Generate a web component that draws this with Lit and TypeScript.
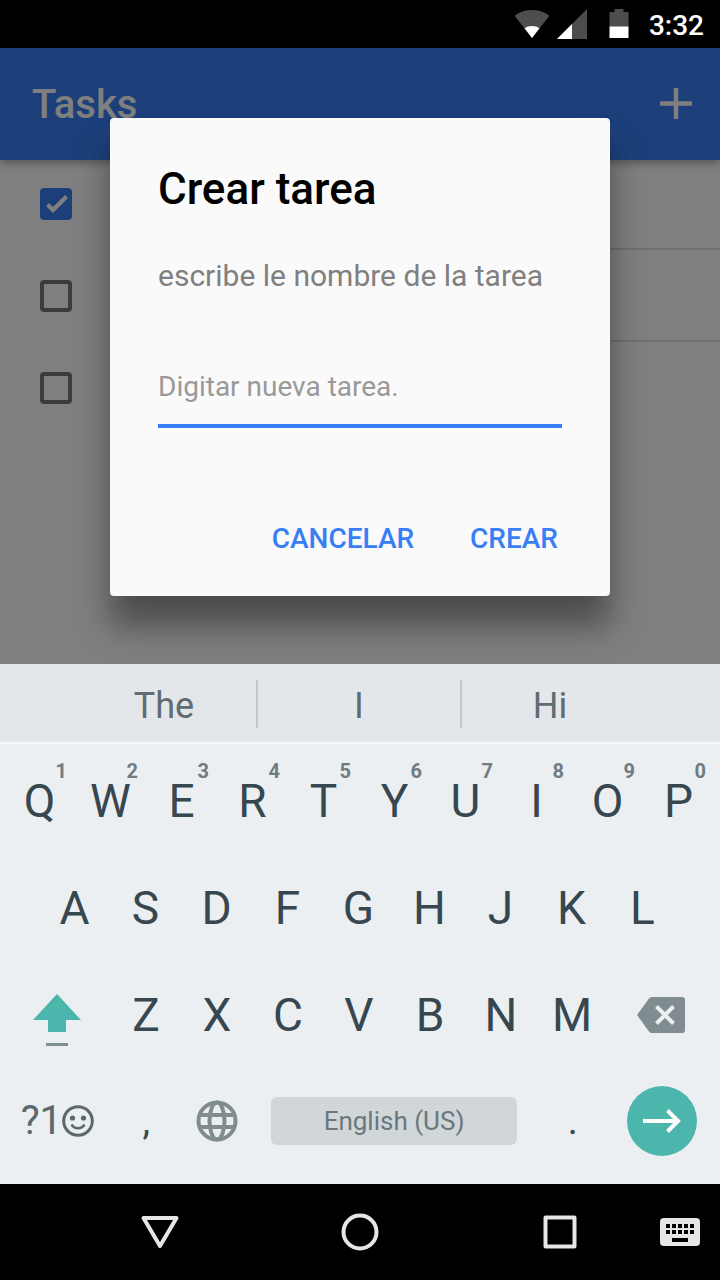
import { LitElement, html, css, svg } from "lit";
import { customElement, state } from "lit/decorators.js";

@customElement("status-bar")
class StatusBar extends LitElement {
  static styles = css`
    :host {
      display: flex;
      align-items: center;
      justify-content: flex-end;
      height: 48px;
      padding-right: 16px;
      background: #000;
      color: #fff;
    }
    .wifi { margin-right: 7px; }
    .signal { margin-right: 22px; }
    .battery { margin-right: 20px; }
    .time {
      font: 500 28px/32px Roboto, sans-serif;
      padding-top: 4px;
    }
  `;
  render() {
    return html`
      <svg class="wifi" width="36" height="30" viewBox="0 0 36 30" aria-hidden="true">
        <path fill="#4d4d4d" d="M18 29 .6 6.800Q8 1 18 1t17.400 5.800z" />
        <path fill="#fff" d="M18 29 10.500 19.300Q13.500 17 18 17t7.500 2.300z" />
      </svg>
      <svg class="signal" width="30" height="30" viewBox="0 0 30 30" aria-hidden="true">
        <path fill="#4d4d4d" d="M0 30 30 0v30z" />
        <path fill="#fff" d="M0 30 15 15v15z" />
      </svg>
      <svg class="battery" width="20" height="30" viewBox="0 0 20 30" aria-hidden="true">
        <path fill="#4d4d4d" d="M5.500 0h9v3H19.500v15H.5V3h5z" />
        <path fill="#fff" d="M.5 17.500h19V29H.5z" />
      </svg>
      <time class="time">3:32</time>
    `;
  }
}

@customElement("task-list")
class TaskList extends LitElement {
  @state() tasks = [true, false, false];

  static styles = css`
    :host { display: block; }
    .bar {
      position: relative;
      display: flex;
      align-items: center;
      justify-content: space-between;
      height: 112px;
      padding: 0 16px 0 32px;
      box-sizing: border-box;
      background: #3a7ef2;
      box-shadow: 0 2px 10px rgba(0, 0, 0, 0.4);
    }
    .title {
      margin: 0;
      padding-top: 2px;
      font: 500 40px/48px Roboto, sans-serif;
      color: #fff;
    }
    .add {
      display: grid;
      place-items: center;
      width: 56px;
      height: 56px;
      padding: 0;
      border: 0;
      background: none;
    }
    .list { list-style: none; margin: 0; padding: 0; }
    .item { display: flex; padding-left: 40px; }
    .check {
      appearance: none;
      flex: none;
      width: 32px;
      height: 32px;
      margin: 30px 40px 30px 0;
      border: 4px solid #787878;
      border-radius: 4px;
      box-sizing: border-box;
    }
    .item:first-child .check { margin-top: 28px; }
    .check:checked { border: 0; background: #3a7ef2; }
    .check:checked::before {
      content: "";
      display: block;
      width: 32px;
      height: 32px;
      background: #fff;
      clip-path: polygon(6px 18px, 13px 25px, 28px 10px, 25px 7px, 13px 19px, 9px 15px);
    }
    .name { flex: 1; border-bottom: 2px solid #dedede; }
    .item:last-child .name { border: 0; }
  `;
  render() {
    return html`
      <header class="bar">
        <h1 class="title">Tasks</h1>
        <button class="add" aria-label="Crear">
          <svg width="32" height="32" viewBox="0 0 32 32">
            <path d="M16 0v31M0 15.500h32" stroke="#fff" stroke-width="4.500" />
          </svg>
        </button>
      </header>
      <ul class="list">
        ${this.tasks.map(
          (done, i) => html`<li class="item">
            <input class="check" type="checkbox" .checked=${done} aria-label="Tarea ${i + 1}" />
            <span class="name"></span>
          </li>`
        )}
      </ul>
    `;
  }
}

@customElement("task-dialog")
class TaskDialog extends LitElement {
  static styles = css`
    :host {
      display: block;
      width: 500px;
      max-width: calc(100% - 48px);
      box-sizing: border-box;
      border-radius: 4px;
      background: #fafafa;
      box-shadow: 0 30px 32px rgba(0, 0, 0, 0.4);
      font-family: Roboto, sans-serif;
    }
    .head { padding: 45px 48px 0; }
    .title { margin: 0 0 43px; font-size: 44px; line-height: 52px; font-weight: 500; color: #000; }
    .message { display: block; font-size: 30px; line-height: 36px; color: #808080; }
    .body { padding: 54px 48px 0; }
    .field {
      display: block;
      width: 100%;
      height: 80px;
      box-sizing: border-box;
      padding: 0;
      border: 0;
      border-bottom: 4px solid #387ef5;
      border-radius: 0;
      outline: 0;
      background: none;
      font: 400 28px/36px Roboto, sans-serif;
      color: #000;
    }
    .field::placeholder { color: #999; opacity: 1; }
    .actions {
      display: flex;
      justify-content: flex-end;
      gap: 16px;
      padding: 75px 32px 21px;
    }
    .action {
      height: 72px;
      padding: 0 20px;
      border: 0;
      background: none;
      color: #387ef5;
      font: 500 28px/36px Roboto, sans-serif;
      text-transform: uppercase;
    }
  `;
  render() {
    return html`
      <form role="dialog" aria-labelledby="title" @submit=${(e: Event) => e.preventDefault()}>
        <div class="head">
          <h2 class="title" id="title">Crear tarea</h2>
          <label class="message" for="name">escribe le nombre de la tarea</label>
        </div>
        <div class="body">
          <input class="field" id="name" type="text" placeholder="Digitar nueva tarea." />
        </div>
        <div class="actions">
          <button class="action" type="button">Cancelar</button>
          <button class="action" type="submit">Crear</button>
        </div>
      </form>
    `;
  }
}

const letters = (row: string, hints = "") =>
  [...row].map(
    (c, i) => html`<button class="key">${c}${hints ? html`<span class="hint">${hints[i]}</span>` : ""}</button>`
  );

@customElement("soft-keyboard")
class SoftKeyboard extends LitElement {
  static styles = css`
    :host {
      display: block;
      background: #ebeff2;
      color: #37474f;
      font-family: Roboto, sans-serif;
    }
    button {
      margin: 0;
      padding: 0;
      border: 0;
      background: none;
      color: inherit;
      font-family: inherit;
    }
    .suggestions {
      display: grid;
      grid-template-columns: 186fr 204fr 176fr;
      height: 80px;
      padding: 16px 82px 14px 72px;
      box-sizing: border-box;
      border-bottom: 2px solid #f9fafb;
      background: #e3e7ea;
    }
    .suggestion { padding-top: 4px; font-size: 36px; line-height: 44px; color: #5f6c73; }
    .suggestion:not(:last-child) { border-right: 2px solid #c3c8cb; }
    .keys { padding: 3px 0 11px; }
    .row { display: grid; height: 107px; }
    .row:last-child { height: 105px; }
    .ten { grid-template-columns: repeat(10, 1fr); padding: 0 6px 0 4px; }
    .nine { grid-template-columns: repeat(9, 1fr); padding: 0 42px 0 39px; }
    .shifted { grid-template-columns: 3fr repeat(7, 2fr) 3fr; padding: 0 6px 0 4px; }
    .bottom { grid-template-columns: 3fr 2fr 2fr 8fr 2fr 3fr; padding: 0 5px 0 4px; }
    .key { position: relative; font-size: 46px; line-height: 48px; }
    .hint {
      position: absolute;
      top: 12px;
      right: 8px;
      font-size: 20px;
      line-height: 24px;
      font-weight: 700;
      color: #6f7c82;
    }
    .mark { font-size: 38px; }
    .icon { display: grid; place-items: center; }
    .symbols {
      display: flex;
      align-items: center;
      justify-content: center;
      font-size: 40px;
      color: #5b686d;
    }
    .space {
      align-self: center;
      height: 48px;
      margin: 0 20px 0 18px;
      border-radius: 6px;
      background: #d1d6d9;
      font-size: 26px;
      color: #6b777c;
    }
    .enter {
      place-self: center;
      display: grid;
      place-items: center;
      width: 70px;
      height: 70px;
      border-radius: 50%;
      background: #4db6ac;
    }
  `;
  render() {
    return html`
      <div class="suggestions">
        <button class="suggestion">The</button>
        <button class="suggestion">I</button>
        <button class="suggestion">Hi</button>
      </div>
      <div class="keys">
        <div class="row ten">${letters("QWERTYUIOP", "1234567890")}</div>
        <div class="row nine">${letters("ASDFGHJKL")}</div>
        <div class="row shifted">
          <button class="icon" aria-label="Shift">
            <svg width="48" height="64" viewBox="0 0 48 64">
              <path fill="#4db6ac" d="M24 11 48 37H33v12H15V37H0z" />
              <path fill="#808c90" d="M13 60h22v3H13z" />
            </svg>
          </button>
          ${letters("ZXCVBNM")}
          <button class="icon" aria-label="Delete">
            <svg width="48" height="40" viewBox="0 0 48 40">
              <path fill="#808c90" d="M15 2h30a3 3 0 0 1 3 3v30a3 3 0 0 1-3 3H15q-2 0-3-1.500L0 20 12 3.500Q13 2 15 2z" />
              <path d="m19.500 11.500 17 17m0-17-17 17" stroke="#ebeff2" stroke-width="4" />
            </svg>
          </button>
        </div>
        <div class="row bottom">
          <button class="symbols">
            ?1<svg width="32" height="32" viewBox="0 0 32 32" role="img" aria-label="Emoji">
              <g fill="none" stroke="#5b686d" stroke-width="3">
                <circle cx="16" cy="16" r="14.300" />
                <path d="M9.500 19.500q2.500 3.800 6.500 3.800t6.500-3.800" stroke-width="2.600" />
              </g>
              <circle cx="10.500" cy="13" r="2.600" fill="#5b686d" />
              <circle cx="21.500" cy="13" r="2.600" fill="#5b686d" />
            </svg>
          </button>
          <button class="mark">,</button>
          <button class="icon" aria-label="Language">
            <svg width="42" height="42" viewBox="0 0 42 42" fill="none" stroke="#808c90" stroke-width="4">
              <circle cx="21" cy="21" r="18.500" />
              <ellipse cx="21" cy="21" rx="7.500" ry="18.500" />
              <path d="M4 15h34M4 27h34" />
            </svg>
          </button>
          <button class="space">English (US)</button>
          <button class="mark">.</button>
          <button class="enter" aria-label="Enter">
            <svg width="38" height="26" viewBox="0 0 38 26" fill="none" stroke="#fff" stroke-width="4">
              <path d="M0 13h35M24.500 2.500 35 13 24.500 23.500" />
            </svg>
          </button>
        </div>
      </div>
    `;
  }
}

const dot = (x: number, y: number) => svg`<rect x=${x} y=${y} width="4" height="4" />`;

@customElement("nav-bar")
class NavBar extends LitElement {
  static styles = css`
    :host {
      display: grid;
      grid-template-columns: repeat(3, 1fr) 60px;
      height: 96px;
      padding-left: 60px;
      background: #000;
    }
    .nav {
      display: grid;
      place-items: center;
      padding: 0;
      border: 0;
      background: none;
    }
    .switch { justify-content: start; }
  `;
  render() {
    return html`
      <button class="nav" aria-label="Back">
        <svg width="40" height="40" viewBox="0 0 40 40" fill="none" stroke="#e6e6e6" stroke-width="4" stroke-linejoin="round">
          <path d="M3.500 6h33L20 34z" />
        </svg>
      </button>
      <button class="nav" aria-label="Home">
        <svg width="40" height="40" viewBox="0 0 40 40" fill="none" stroke="#e6e6e6" stroke-width="4">
          <circle cx="20" cy="20" r="16.500" />
        </svg>
      </button>
      <button class="nav" aria-label="Recents">
        <svg width="40" height="40" viewBox="0 0 40 40" fill="none" stroke="#e6e6e6" stroke-width="4" stroke-linejoin="round">
          <path d="M5.500 5.500h29v29h-29z" />
        </svg>
      </button>
      <button class="nav switch" aria-label="Keyboard">
        <svg width="40" height="28" viewBox="0 0 40 28">
          <rect width="40" height="28" rx="4" fill="#e6e6e6" />
          ${[6, 12, 18, 24, 30].map((x) => [dot(x, 6), dot(x, 12)])}
          <rect x="12" y="20" width="16" height="4" />
        </svg>
      </button>
    `;
  }
}

@customElement("app-root")
class AppRoot extends LitElement {
  static styles = css`
    :host {
      display: flex;
      flex-direction: column;
      min-height: 100vh;
    }
    .stage {
      position: relative;
      flex: 1;
      min-height: 560px;
      overflow: hidden;
      background: #fff;
    }
    .scrim {
      position: absolute;
      inset: 0;
      display: grid;
      place-items: center;
      padding-top: 2px;
      background: rgba(0, 0, 0, 0.5);
    }
  `;
  render() {
    return html`
      <status-bar></status-bar>
      <main class="stage">
        <task-list></task-list>
        <div class="scrim"><task-dialog></task-dialog></div>
      </main>
      <soft-keyboard></soft-keyboard>
      <nav-bar></nav-bar>
    `;
  }
}
